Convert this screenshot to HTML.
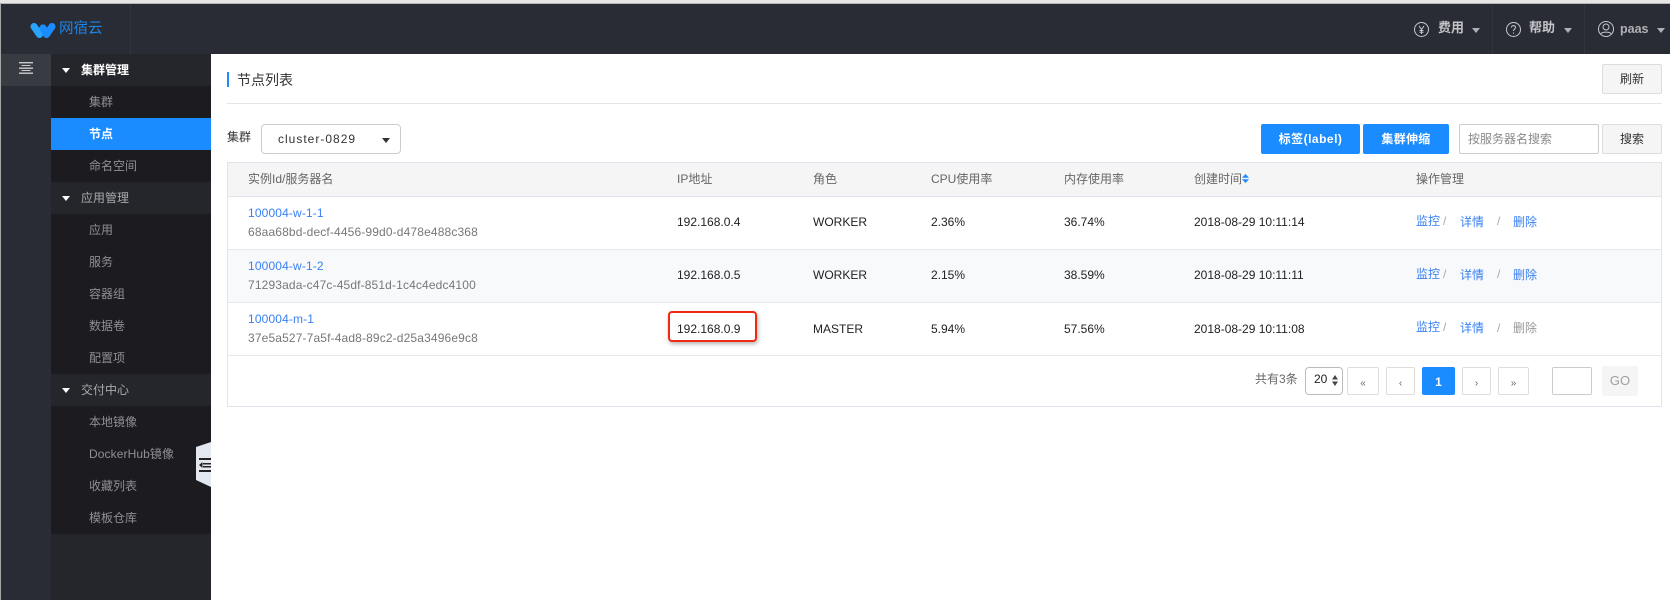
<!DOCTYPE html>
<html lang="zh-CN">
<head>
<meta charset="utf-8">
<title>节点列表</title>
<style>
html,body{margin:0;padding:0;background:#fff;}
body{width:1670px;height:600px;overflow:hidden;position:relative;font-family:"Liberation Sans","Noto Sans CJK SC",sans-serif;font-size:12px;color:#333;}
.a{position:absolute;}
.t{position:absolute;line-height:20px;white-space:nowrap;}
.row{position:absolute;left:51px;width:160px;height:32px;line-height:32px;color:#8f9094;}
.row span{position:absolute;left:38px;white-space:nowrap;}
.g{background:#25262b;color:#a9aaad;}
.g span{left:30px;}
.g i{position:absolute;left:11px;top:14px;border-left:4.5px solid transparent;border-right:4.5px solid transparent;border-top:5px solid #fff;}
.s{background:#1b1b20;}
.th{color:#666;}
.bl{color:#3a80f2;}
.sub{color:#777;letter-spacing:.14px;}
.c{color:#222;}
.btn{position:absolute;box-sizing:border-box;text-align:center;border-radius:2px;}
.gray{background:#f5f5f5;border:1px solid #ddd;color:#333;height:30px;line-height:28px;}
.blue{background:#1a8cff;color:#fff;height:30px;line-height:30px;font-weight:bold;}
.pg{box-sizing:border-box;position:absolute;top:367px;height:28px;border:1px solid #ddd;border-radius:2px;background:#fff;text-align:center;line-height:31px;color:#666;font-size:10px;}
.car{position:absolute;border-left:4px solid transparent;border-right:4px solid transparent;border-top:5px solid #aeb0b4;}
.sl{color:#a8a8a8;}
</style>
</head>
<body>
<!-- top strip -->
<div class="a" style="left:0;top:0;width:1670px;height:3px;background:#e6e6e6;"></div>
<div class="a" style="left:0;top:3px;width:1670px;height:1px;background:#b5b5b5;"></div>
<!-- top bar -->
<div class="a" style="left:1px;top:4px;width:1669px;height:50px;background:#2a2c35;"></div>
<div class="a" style="left:0;top:3px;width:1px;height:597px;background:#a5a5a5;"></div>
<div class="a" style="left:130px;top:4px;width:1px;height:50px;background:#33353e;"></div>
<div class="a" style="left:1492px;top:4px;width:1px;height:50px;background:#33353e;"></div>
<div class="a" style="left:1584px;top:4px;width:1px;height:50px;background:#33353e;"></div>
<!-- logo -->
<svg class="a" style="left:30px;top:22px;" width="26" height="17" viewBox="0 0 26 17" fill="none" stroke-width="7" stroke-linecap="round" stroke-linejoin="round">
<path d="M4 4.500L9.500 12.500L13 6" stroke="#28a4fb"/>
<path d="M13 6L16.500 12.500L22 4.500" stroke="#1a8cff"/>
</svg>
<div class="t" style="left:59px;top:19px;font-size:14.500px;color:#1a86e8;">网宿云</div>
<!-- right nav -->
<svg class="a" style="left:1413px;top:21px;" width="17" height="17" viewBox="0 0 17 17" fill="none" stroke="#c8c9cc" stroke-width="1"><circle cx="8.500" cy="8.500" r="7"/><path d="M6 5l2.500 3.500L11 5M8.500 8.500V13M6.500 9.500h4M6.500 11.200h4"/></svg>
<div class="t" style="left:1438px;top:18px;font-size:13px;color:#c3c4c7;font-weight:bold;">费用</div>
<div class="car" style="left:1472px;top:28px;"></div>
<svg class="a" style="left:1505px;top:21px;" width="17" height="17" viewBox="0 0 17 17" fill="none" stroke="#c8c9cc" stroke-width="1"><circle cx="8.500" cy="8.500" r="7"/><path d="M6.500 6.500C6.500 4 10.500 4 10.500 6.500C10.500 8 8.500 8 8.500 10"/><path d="M8.500 11.500v1.200"/></svg>
<div class="t" style="left:1529px;top:18px;font-size:13px;color:#c3c4c7;font-weight:bold;">帮助</div>
<div class="car" style="left:1564px;top:28px;"></div>
<svg class="a" style="left:1597px;top:20px;" width="18" height="18" viewBox="0 0 18 18" fill="none" stroke="#c8c9cc" stroke-width="1"><circle cx="9" cy="9" r="7.500"/><circle cx="9" cy="7" r="3"/><path d="M3.800 14C5 11.500 13 11.500 14.200 14"/></svg>
<div class="t" style="left:1620px;top:19px;font-size:12.500px;font-weight:bold;color:#b0b1b5;">paas</div>
<div class="car" style="left:1657px;top:28px;"></div>

<!-- narrow sidebar -->
<div class="a" style="left:1px;top:54px;width:50px;height:546px;background:#2a2c35;"></div>
<div class="a" style="left:1px;top:54px;width:50px;height:32px;background:#393b42;"></div>
<svg class="a" style="left:19px;top:62px;" width="14" height="12" viewBox="0 0 14 12" fill="#c9cacc"><rect x="0" y="0" width="14" height="1.400"/><rect x="2.500" y="3" width="9" height="1"/><rect x="0" y="5.500" width="14" height="1.400"/><rect x="2.500" y="8" width="9" height="1"/><rect x="0" y="10.500" width="14" height="1.400"/></svg>

<!-- wide sidebar -->
<div class="a" style="left:51px;top:54px;width:160px;height:546px;background:#25262b;"></div>
<div class="row g" style="top:54px;color:#fff;font-weight:bold;"><i></i><span>集群管理</span></div>
<div class="row s" style="top:86px;"><span>集群</span></div>
<div class="row" style="top:118px;background:#1a8cff;color:#fff;font-weight:bold;"><span>节点</span></div>
<div class="row s" style="top:150px;"><span>命名空间</span></div>
<div class="row g" style="top:182px;"><i></i><span>应用管理</span></div>
<div class="row s" style="top:214px;"><span>应用</span></div>
<div class="row s" style="top:246px;"><span>服务</span></div>
<div class="row s" style="top:278px;"><span>容器组</span></div>
<div class="row s" style="top:310px;"><span>数据卷</span></div>
<div class="row s" style="top:342px;"><span>配置项</span></div>
<div class="row g" style="top:374px;"><i></i><span>交付中心</span></div>
<div class="row s" style="top:406px;"><span>本地镜像</span></div>
<div class="row s" style="top:438px;"><span style="letter-spacing:.1px;">DockerHub镜像</span></div>
<div class="row s" style="top:470px;"><span>收藏列表</span></div>
<div class="row s" style="top:502px;"><span>模板仓库</span></div>
<!-- collapse handle -->
<svg class="a" style="left:196px;top:441px;" width="15" height="48" viewBox="0 0 15 48"><path d="M15 1L0 6V39L15 46Z" fill="#e2e7f0"/><rect x="3" y="17" width="12" height="2" fill="#222"/><rect x="7" y="22" width="8" height="1.500" fill="#222"/><path d="M3 24L6.500 21V27Z" fill="#222"/><rect x="7" y="25" width="8" height="1.500" fill="#222"/><rect x="3" y="29" width="12" height="2" fill="#222"/></svg>

<!-- title -->
<div class="a" style="left:227px;top:72px;width:2px;height:15px;background:#1a8cff;"></div>
<div class="t" style="left:237px;top:70px;font-size:14px;color:#333;">节点列表</div>
<div class="btn gray" style="left:1602px;top:64px;width:60px;">刷新</div>
<div class="a" style="left:227px;top:103px;width:1435px;height:1px;background:#e3e6eb;"></div>

<!-- filter row -->
<div class="t" style="left:227px;top:127px;color:#333;">集群</div>
<div class="a" style="left:261px;top:124px;width:140px;height:30px;box-sizing:border-box;border:1px solid #ccc;border-radius:4px;"></div>
<div class="t" style="left:278px;top:129px;letter-spacing:1px;color:#333;">cluster-0829</div>
<div class="car" style="left:382px;top:138px;border-top-color:#333;"></div>
<div class="btn blue" style="left:1261px;top:124px;width:99px;letter-spacing:.5px;">标签(label)</div>
<div class="btn blue" style="left:1363px;top:124px;width:86px;letter-spacing:.3px;">集群伸缩</div>
<div class="a" style="left:1459px;top:124px;width:140px;height:30px;box-sizing:border-box;border:1px solid #ccc;border-radius:2px;"></div>
<div class="t" style="left:1468px;top:129px;color:#8a8a8a;">按服务器名搜索</div>
<div class="btn gray" style="left:1602px;top:124px;width:60px;">搜索</div>

<!-- table frame -->
<div class="a" style="left:227px;top:162px;width:1435px;height:245px;box-sizing:border-box;border:1px solid #dfe4ed;"></div>
<div class="a" style="left:228px;top:163px;width:1433px;height:33px;background:#f5f5f5;"></div>
<div class="a" style="left:228px;top:196px;width:1433px;height:1px;background:#dfe4ed;"></div>
<div class="a" style="left:228px;top:249px;width:1433px;height:1px;background:#e3e7ee;"></div>
<div class="a" style="left:228px;top:250px;width:1433px;height:52px;background:#f8f9fb;"></div>
<div class="a" style="left:228px;top:302px;width:1433px;height:1px;background:#e3e7ee;"></div>
<div class="a" style="left:228px;top:355px;width:1433px;height:1px;background:#e3e7ee;"></div>

<!-- header cells -->
<div class="t th" style="left:248px;top:169px;">实例Id/服务器名</div>
<div class="t th" style="left:677px;top:169px;">IP地址</div>
<div class="t th" style="left:813px;top:169px;">角色</div>
<div class="t th" style="left:931px;top:169px;">CPU使用率</div>
<div class="t th" style="left:1064px;top:169px;">内存使用率</div>
<div class="t th" style="left:1194px;top:169px;">创建时间</div>
<svg class="a" style="left:1242px;top:174px;" width="7" height="9" viewBox="0 0 7 9" fill="#1a8cff"><path d="M3.500 0L7 3.800H0Z"/><path d="M3.500 9L0 5.200H7Z"/></svg>
<div class="t th" style="left:1416px;top:169px;">操作管理</div>

<!-- row 1 -->
<div class="t bl" style="left:248px;top:203px;letter-spacing:.14px;">100004-w-1-1</div>
<div class="t sub" style="left:248px;top:222px;">68aa68bd-decf-4456-99d0-d478e488c368</div>
<div class="t c" style="left:677px;top:212px;">192.168.0.4</div>
<div class="t c" style="left:813px;top:212px;">WORKER</div>
<div class="t c" style="left:931px;top:212px;">2.36%</div>
<div class="t c" style="left:1064px;top:212px;">36.74%</div>
<div class="t c" style="left:1194px;top:212px;">2018-08-29 10:11:14</div>
<div class="t bl" style="left:1416px;top:211px;">监控</div><div class="t sl" style="left:1443px;top:211px;">/</div>
<div class="t bl" style="left:1460px;top:212px;">详情</div><div class="t sl" style="left:1497px;top:211px;">/</div>
<div class="t bl" style="left:1513px;top:212px;">删除</div>

<!-- row 2 -->
<div class="t bl" style="left:248px;top:256px;letter-spacing:.14px;">100004-w-1-2</div>
<div class="t sub" style="left:248px;top:275px;">71293ada-c47c-45df-851d-1c4c4edc4100</div>
<div class="t c" style="left:677px;top:265px;">192.168.0.5</div>
<div class="t c" style="left:813px;top:265px;">WORKER</div>
<div class="t c" style="left:931px;top:265px;">2.15%</div>
<div class="t c" style="left:1064px;top:265px;">38.59%</div>
<div class="t c" style="left:1194px;top:265px;">2018-08-29 10:11:11</div>
<div class="t bl" style="left:1416px;top:264px;">监控</div><div class="t sl" style="left:1443px;top:264px;">/</div>
<div class="t bl" style="left:1460px;top:265px;">详情</div><div class="t sl" style="left:1497px;top:264px;">/</div>
<div class="t bl" style="left:1513px;top:265px;">删除</div>

<!-- row 3 -->
<div class="t bl" style="left:248px;top:309px;letter-spacing:.14px;">100004-m-1</div>
<div class="t sub" style="left:248px;top:328px;">37e5a527-7a5f-4ad8-89c2-d25a3496e9c8</div>
<div class="t c" style="left:677px;top:319px;">192.168.0.9</div>
<div class="t c" style="left:813px;top:319px;">MASTER</div>
<div class="t c" style="left:931px;top:319px;">5.94%</div>
<div class="t c" style="left:1064px;top:319px;">57.56%</div>
<div class="t c" style="left:1194px;top:319px;">2018-08-29 10:11:08</div>
<div class="t bl" style="left:1416px;top:317px;">监控</div><div class="t sl" style="left:1443px;top:317px;">/</div>
<div class="t bl" style="left:1460px;top:318px;">详情</div><div class="t sl" style="left:1497px;top:318px;">/</div>
<div class="t" style="left:1513px;top:318px;color:#999;">删除</div>

<!-- red highlight -->
<div class="a" style="left:668px;top:311px;width:89px;height:31px;box-sizing:border-box;border:2.500px solid #f02a12;border-radius:4px;box-shadow:1px 2px 4px rgba(0,0,0,.3);"></div>

<!-- pagination -->
<div class="t" style="left:1255px;top:369px;color:#666;">共有3条</div>
<div class="a" style="left:1305px;top:367px;width:38px;height:28px;box-sizing:border-box;border:1px solid #bbb;border-radius:4px;"></div>
<div class="t" style="left:1314px;top:369px;color:#222;">20</div>
<svg class="a" style="left:1332px;top:375px;" width="6" height="12" viewBox="0 0 6 12" fill="#444"><path d="M3 0L6 4.500H0Z"/><path d="M3 11L0 6.500H6Z"/></svg>
<div class="pg" style="left:1347px;width:32px;">«</div>
<div class="pg" style="left:1386px;width:29px;">‹</div>
<div class="pg" style="left:1422px;width:33px;background:#1a8cff;border-color:#1a8cff;color:#fff;font-size:12px;font-weight:bold;line-height:28px;">1</div>
<div class="pg" style="left:1462px;width:29px;">›</div>
<div class="pg" style="left:1498px;width:31px;">»</div>
<div class="a" style="left:1552px;top:367px;width:40px;height:28px;box-sizing:border-box;border:1px solid #ccc;border-radius:2px;"></div>
<div class="btn" style="left:1602px;top:366px;width:36px;height:30px;line-height:30px;background:#f5f5f5;color:#a0a0a0;font-size:13px;">GO</div>
</body>
</html>
